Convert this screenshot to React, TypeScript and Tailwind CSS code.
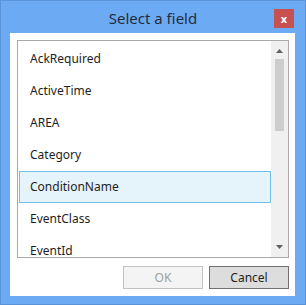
import React from "react";

const items = ["AckRequired", "ActiveTime", "AREA", "Category", "ConditionName", "EventClass", "EventId"];

export default function App() {
  return (
    <div
      className="w-[306px] h-[305px] bg-[#6cabf3] border border-[#5a93d8] flex flex-col"
      style={{ fontFamily: '"Noto Sans", "Open Sans", sans-serif' }}
    >
      <div className="relative h-[32px] flex items-center justify-center">
        <span className="text-[15px] text-[#262b3b] leading-none mt-[2px]">Select a field</span>
        <div className="absolute left-[273px] top-[8px] w-[20px] h-[19px] bg-[#c75050] flex items-center justify-center">
          <span className="text-white text-[11px] font-bold leading-none mb-[1px]">x</span>
        </div>
      </div>
      <div className="flex-1 ml-[9px] mr-[10px] mb-[8px] bg-white flex flex-col pl-[7px] pr-[6px] pt-[7px] pb-[7px]">
        <div className="h-[218px] border border-[#a9a9a9] flex">
          <div className="flex-1 pl-[1px] pt-[2px] flex flex-col">
            {items.map((it) => (
              <div
                key={it}
                className={
                  it === "ConditionName"
                    ? "h-[32px] shrink-0 flex items-center pl-[10px] text-[12px] text-[#1e1e1e] bg-[#e5f3fb] border border-[#70c0e7]"
                    : "h-[32px] shrink-0 flex items-center pl-[11px] text-[12px] text-[#1e1e1e]"
                }
              >
                {it}
              </div>
            ))}
          </div>
          <div className="w-[17px] bg-[#f0f0f0] flex flex-col items-center">
            <svg width="7" height="4" viewBox="0 0 7 4" className="mt-[8px]">
              <path d="M0 4 L3.5 0 L7 4 Z" fill="#606060" />
            </svg>
            <div className="w-[9px] h-[72px] bg-[#cdcdcd] mt-[6px]" />
            <div className="flex-1" />
            <svg width="7" height="4" viewBox="0 0 7 4" className="mb-[8px]">
              <path d="M0 0 L7 0 L3.5 4 Z" fill="#606060" />
            </svg>
          </div>
        </div>
        <div className="flex justify-end gap-[6px] mt-[8px]">
          <div className="w-[80px] h-[23px] border border-[#c3c3c3] bg-[#f4f4f4] flex items-center justify-center text-[12px] text-[#a0a0a0]">
            OK
          </div>
          <div className="w-[80px] h-[23px] border border-[#707070] bg-[#dddddd] flex items-center justify-center text-[12px] text-[#1e1e1e]">
            Cancel
          </div>
        </div>
      </div>
    </div>
  );
}
